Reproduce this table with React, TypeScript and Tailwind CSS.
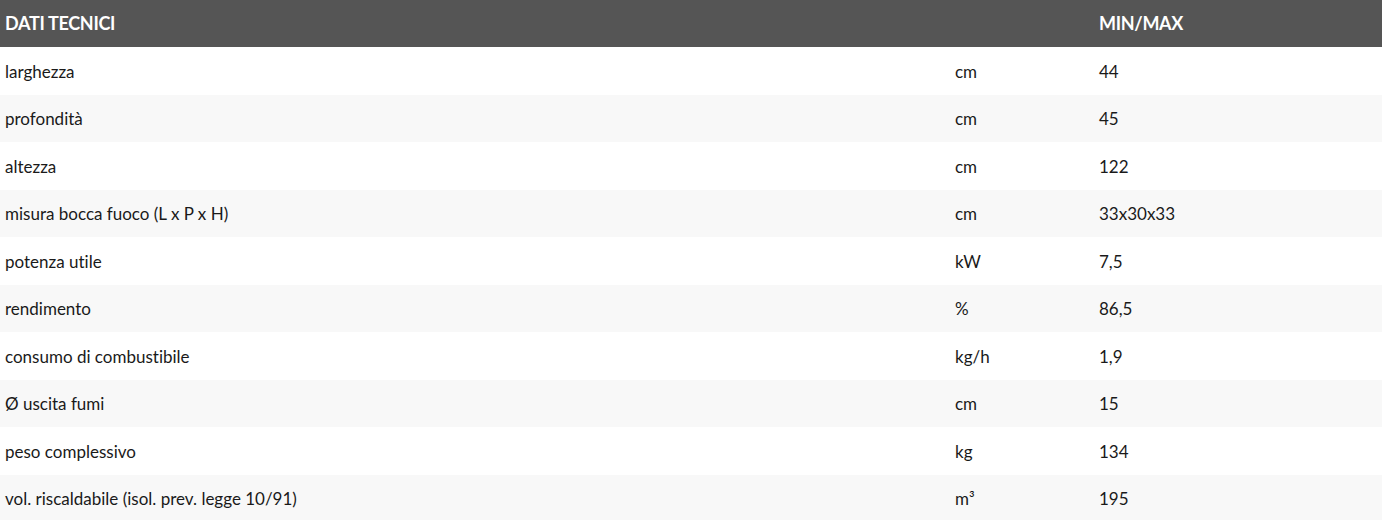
import React from "react";

const rows: [string, string, string][] = [
  ["larghezza", "cm", "44"],
  ["profondità", "cm", "45"],
  ["altezza", "cm", "122"],
  ["misura bocca fuoco (L x P x H)", "cm", "33x30x33"],
  ["potenza utile", "kW", "7,5"],
  ["rendimento", "%", "86,5"],
  ["consumo di combustibile", "kg/h", "1,9"],
  ["Ø uscita fumi", "cm", "15"],
  ["peso complessivo", "kg", "134"],
  ["vol. riscaldabile (isol. prev. legge 10/91)", "m³", "195"],
];

export default function App() {
  return (
    <div className="w-[1382px] h-[520px] overflow-hidden bg-white font-['Lato','Liberation_Sans',sans-serif] text-[17px] text-[#1a1a1a] [font-variant-ligatures:none]">
      <div className="grid grid-cols-[950px_144px_1fr] h-[47px] items-center bg-[#555555] text-white font-bold text-[18px] tracking-[-0.3px]">
        <div className="pl-[5px]">DATI TECNICI</div>
        <div className="pl-[5px]"></div>
        <div className="pl-[5px]">MIN/MAX</div>
      </div>
      {rows.map((r, i) => (
        <div
          key={i}
          className={`grid grid-cols-[950px_144px_1fr] h-[47.5px] items-center pt-[1px] ${i % 2 === 1 ? "bg-[#f8f8f8]" : "bg-white"}`}
        >
          <div className="pl-[5px]">{r[0]}</div>
          <div className="pl-[5px]">{r[1]}</div>
          <div className="pl-[5px]">{r[2]}</div>
        </div>
      ))}
    </div>
  );
}
